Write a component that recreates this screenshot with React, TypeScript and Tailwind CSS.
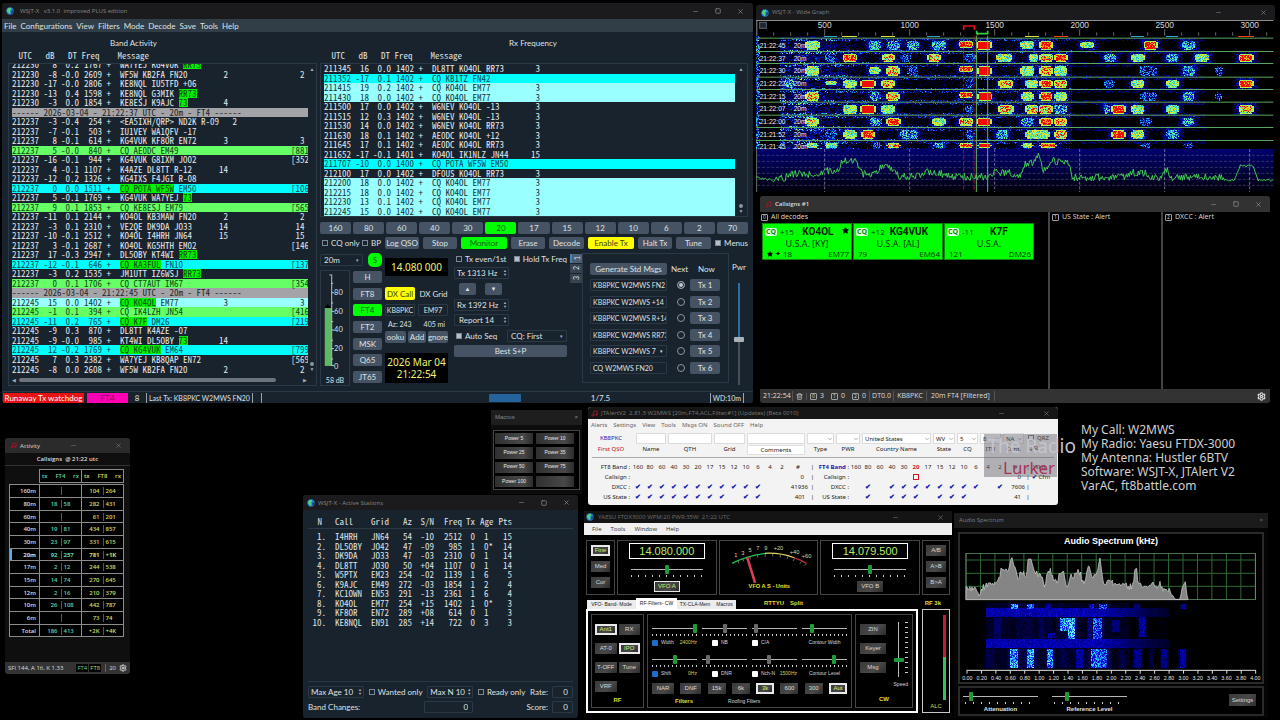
import React from "react";
import { Minus, Square, X, Settings, Music, Trash2, Star, ChevronDown } from "lucide-react";

/* ---------- shared class sets ---------- */

const mono = "font-['Noto_Sans_Mono_CJK_SC','Liberation_Mono',monospace] text-[9px]";
const ubuntu = "font-['Lato','Noto_Sans',sans-serif] text-[8px] leading-[10px]";
const segoe = "font-['Open_Sans','Noto_Sans',sans-serif]";
const msSans = "font-['Liberation_Sans',Arial,sans-serif]";
const darkBtn = "flex items-center justify-center overflow-hidden whitespace-nowrap rounded-[2px] bg-[#455364] text-[#dfe1e2]";
const darkField = "border border-[#2b3946] bg-[#19232d] text-[#dfe1e2] outline-none rounded-[1px]";

/* ---------- window furniture ---------- */

function Globe() {
  return (
    <svg viewBox="0 0 12 12" className="size-2 shrink-0" aria-hidden="true">
      <circle cx="6" cy="6" r="5.5" fill="#2878c8" />
      <path d="M3 2l4-1 1 3-2 1 1 3-2 3-2-3-2-2z" fill="#4fd08a" />
      <path d="M8 6l3-1-1 4-2 1z" fill="#123c78" />
    </svg>
  );
}

function Controls({ className, hideMax }: { className: string; hideMax?: boolean }) {
  return (
    <div className={className}>
      <button type="button" aria-label="Minimize"><Minus className="size-[7px]" strokeWidth={2} /></button>
      <button type="button" aria-label="Maximize" className={hideMax ? "opacity-0" : ""}><Square className="size-[6px]" strokeWidth={3} /></button>
      <button type="button" aria-label="Close"><X className="size-[7px]" strokeWidth={2.5} /></button>
    </div>
  );
}

function Tick({ label, on }: { label: string; on?: boolean }) {
  return (
    <label className="flex items-center gap-[3px] whitespace-nowrap">
      <input
        type="checkbox"
        defaultChecked={on}
        className="size-[6px] appearance-none border border-[#7b8794] bg-transparent checked:bg-[#b4bec8]"
      />
      {label}
    </label>
  );
}

/* ---------- decode lists ---------- */

type Tone = "" | "green" | "cyan" | "pale";
type Decode = { utc: string; db?: string; dt?: string; hz?: string; a?: string; hl?: string; b?: string; n?: string; end?: string; tone?: Tone; rule?: boolean };

const d = (utc: string, db: string, dt: string, hz: string, a: string, hl = "", b = "", n = "", end = "", tone: Tone = ""): Decode => ({ utc, db, dt, hz, a, hl, b, n, end, tone });

const band: Decode[] = [
  d("212230", "8", "0.2", "1767", "WA7YEJ KG4VUK ", "RR73"),
  d("212230", "-8", "-0.0", "2609", "WF5W KB2FA FN20", "", "", "2", "  2"),
  d("212230", "-17", "-0.0", "2806", "KE8NQL IU5TFD +06"),
  d("212230", "-13", "0.4", "1598", "KE8NQL G3MIK ", "RR73"),
  d("212230", "-3", "0.0", "1854", "KE8ESJ K9AJC ", "73", "", "4"),
  { utc: "------ 2026-03-04 - 21:22:37 UTC - 20m - FT4 ------", rule: true },
  d("212237", "-3", "-0.4", "254", "<EA5IXH/QRP> ND2K R-09   2"),
  d("212237", "-7", "-0.1", "503", "IU1VEY WA1QFV -17"),
  d("212237", "8", "-0.1", "614", "KG4VUK KF8OR EN72", "", "", "3", "  3"),
  d("212237", "5", "-0.0", "840", "CQ AE0DC EM49", "", "", "", "[881", "green"),
  d("212237", "-16", "-0.1", "944", "KG4VUK G8IXM JO02", "", "", "", "[352"),
  d("212237", "4", "-0.1", "1107", "K4AZE DL8TT R-12", "", "", "14"),
  d("212237", "-12", "0.2", "1326", "KG4IXS F4JGI R-08"),
  d("212237", "0", "0.0", "1511", "", "CQ POTA WF5W", " EM50", "", "[106", "cyan"),
  d("212237", "5", "-0.1", "1769", "KG4VUK WA7YEJ ", "73"),
  d("212237", "9", "0.1", "1853", "CQ KE8ESJ EM79", "", "", "", "[565", "green"),
  d("212237", "-11", "0.1", "2144", "KO4OL KB3MAW FN20", "", "", "2", "  2"),
  d("212237", "-3", "0.1", "2310", "VE2QE DK9DA JO33", "", "", "14", " 14"),
  d("212237", "-10", "-0.1", "2512", "KO4OL I4HRH JN64", "", "", "15", " 15"),
  d("212237", "3", "-0.1", "2687", "KO4OL KG5HTH EM02", "", "", "", "[146"),
  d("212237", "17", "-0.3", "2947", "DL5OBY KT4WI ", "RR73"),
  d("212237", "-12", "-0.1", "646", "", "CQ KA3FUL", " FN10", "", "[137", "cyan"),
  d("212237", "-3", "0.2", "1535", "JM1UTT IZ6WSJ ", "RR73"),
  d("212237", "0", "0.1", "1706", "CQ CT7AUT IM67", "", "", "", "[354", "green"),
  { utc: "------ 2026-03-04 - 21:22:45 UTC - 20m - FT4 ------", rule: true },
  d("212245", "15", "0.0", "1402", "", "CQ KO4OL", " EM77", "3", "  3", "pale"),
  d("212245", "-1", "0.1", "394", "CQ IK4LZH JN54", "", "", "", "[416", "green"),
  d("212245", "-11", "0.2", "765", "", "CQ K7F", " DM26", "", "[219", "cyan"),
  d("212245", "-9", "0.3", "870", "DL8TT K4AZE -07"),
  d("212245", "-9", "-0.0", "985", "KT4WI DL5OBY ", "73", "", "14"),
  d("212245", "12", "-0.2", "1769", "", "CQ KG4VUK", " EM64", "", "[799", "cyan"),
  d("212245", "7", "0.3", "2382", "WA7YEJ KB8QAP EN72", "", "", "", "[569"),
  d("212245", "-8", "0.0", "2608", "WF5W KB2FA FN20", "", "", "2", "  2"),
];

const rx: Decode[] = [
  d("211345", "16", "0.0", "1402", "DL8TT KO4OL RR73", "", "", "3"),
  d("211352", "-17", "0.1", "1402", "CQ KB1TZ FN42", "", "", "", "", "cyan"),
  d("211415", "19", "0.2", "1402", "CQ KO4OL EM77", "", "", "3", "", "pale"),
  d("211430", "18", "0.0", "1402", "CQ KO4OL EM77", "", "", "3", "", "pale"),
  d("211500", "17", "0.0", "1402", "W6NEV KO4OL -13", "", "", "3"),
  d("211515", "12", "0.3", "1402", "W6NEV KO4OL -13", "", "", "3"),
  d("211530", "14", "0.0", "1402", "W6NEV KO4OL RR73", "", "", "3"),
  d("211630", "18", "0.1", "1402", "AE0DC KO4OL +12", "", "", "3"),
  d("211645", "17", "0.1", "1402", "AE0DC KO4OL RR73", "", "", "3"),
  d("211652", "-17", "-0.1", "1401", "KO4OL IK1NLZ JN44", "", "", "15"),
  d("211707", "-10", "0.0", "1400", "CQ POTA WF5W EM50", "", "", "", "", "cyan"),
  d("212100", "17", "0.0", "1402", "DF0US KO4OL RR73", "", "", "3"),
  d("212200", "18", "0.0", "1402", "CQ KO4OL EM77", "", "", "3", "", "pale"),
  d("212215", "18", "0.0", "1402", "CQ KO4OL EM77", "", "", "3", "", "pale"),
  d("212230", "13", "0.1", "1402", "CQ KO4OL EM77", "", "", "3", "", "pale"),
  d("212245", "15", "0.0", "1402", "CQ KO4OL EM77", "", "", "3", "", "pale"),
];

const tones: Record<string, string> = {
  "": "text-[#e4e8ea]",
  green: "bg-[#66ff66] text-[#0d4a12]",
  cyan: "bg-[#00ffff] text-[#0b4a55]",
  pale: "bg-[#99ffff] text-[#12363c]",
};

function DecodeTable({ rows, label, className }: { rows: Decode[]; label: string; className: string }) {
  return (
    <table aria-label={label} className={`${mono} ${className} w-full shrink-0 table-fixed border-collapse leading-[9px]`}>
      <colgroup>
        <col className="w-[27px]" /><col className="w-[18px]" /><col className="w-[22px]" /><col className="w-[23px]" />
        <col className="w-[9px]" /><col className="w-[90px]" /><col className="w-[27px]" /><col />
      </colgroup>
      <tbody>
        {rows.map((r, i) =>
          r.rule ? (
            <tr key={i} className="bg-[#a3a3a8] text-[#22262a]"><td colSpan={8} className="whitespace-pre p-0">{r.utc}</td></tr>
          ) : (
            <tr key={i} className={tones[r.tone ?? ""]}>
              <td className="p-0">{r.utc}</td>
              <td className="p-0 text-right">{r.db}</td>
              <td className="whitespace-nowrap p-0 text-right">{r.dt}</td>
              <td className="p-0 text-right">{r.hz}</td>
              <td className="p-0 text-right">+</td>
              <td className="whitespace-pre p-0 pl-[9px]">{r.a}{r.hl && <span className="inline-block h-[9px] bg-[#00f000] align-top text-[#064d0a]">{r.hl}</span>}{r.b}</td>
              <td className="p-0 text-right">{r.n}</td>
              <td className="whitespace-pre p-0 pl-[63px]">{r.end}</td>
            </tr>
          ),
        )}
      </tbody>
    </table>
  );
}

function VScroll({ className }: { className: string }) {
  return (
    <div className={`${className} flex flex-col items-center justify-between py-[2px] text-[5px] leading-[6px] text-[#9da9b5]`}>
      <span>▲</span>
      <span className="flex flex-col items-center"><span className="size-[4px] rounded-full bg-[#8b95a0]" />▼</span>
    </div>
  );
}

/* ---------- WSJT-X main ---------- */

function Spin({ text, className }: { text: string; className: string }) {
  return (
    <div className={`${darkField} ${className} flex h-[12px] items-center justify-between pl-[2px] pr-[1px]`}>
      <input aria-label={text} defaultValue={text} className="w-full min-w-0 bg-transparent outline-none" />
      <span className="flex flex-col text-[4px] leading-[4px] text-[#aab4be]"><span>▲</span><span>▼</span></span>
    </div>
  );
}

function DarkSelect({ value, className }: { value: string; className: string }) {
  return (
    <div className={`${darkField} ${className} flex items-center pr-[3px]`}>
      <select aria-label={value} className="w-full min-w-0 appearance-none bg-transparent pl-[3px] outline-none"><option>{value}</option></select>
      <span className="text-[5px] text-[#aab4be]">▾</span>
    </div>
  );
}

const messages = ["KB8PKC W2MWS FN2", "KB8PKC W2MWS +14", "KB8PKC W2MWS R+14", "KB8PKC W2MWS RR73", "KB8PKC W2MWS 7", "CQ W2MWS FN20"];

function LevelMeter() {
  return (
    <div className="flex w-[30px] flex-1 flex-col items-center border border-[#2b3946]">
      <svg viewBox="0 0 30 104" className="h-[104px] w-[28px]" aria-label="Input level">
        <rect x="4" y="36" width="7" height="62" fill="#5fb864" />
        <path d="M4 36l3-4 4 4z" fill="#000" />
        <g stroke="#c9d0d6" strokeWidth="1" fill="none">
          <path d="M11.500 0V98M11 9.500h2M11 30.500h2M11 50.500h2M11 70.500h2M11 90.500h2M11 0.500h-2M11 19.500h3M11 39.500h3M11 59.500h3M11 79.500h3M11 97.500h3" />
        </g>
        <g fill="#dfe1e2" fontSize="8" fontFamily="Lato, sans-serif">
          <text x="14" y="22">80</text><text x="14" y="42">60</text><text x="14" y="62">40</text><text x="14" y="82">20</text><text x="14" y="101">0</text>
        </g>
      </svg>
      <span className="whitespace-nowrap text-[7px]">58 dB</span>
    </div>
  );
}

function Main() {
  return (
    <section aria-label="WSJT-X" className={`${ubuntu} absolute left-[2px] top-[3px] flex h-[400px] w-[751px] flex-col overflow-hidden rounded-[3px] bg-[#19232d] text-[#dfe1e2]`}>
      <header className={`${segoe} flex h-[16px] items-center gap-[6px] bg-[#1b1b1d] pl-[4px] text-[6px] text-[#85888a]`}>
        <Globe />
        <span className="whitespace-pre">WSJT-X   v3.1.0  improved PLUS edition</span>
        <Controls className="ml-auto flex items-center gap-[16px] pr-[9px]" />
      </header>
      <nav className="flex h-[13px] items-center gap-[4px] bg-[#313d47] pl-[2px]">
        {["File", "Configurations", "View", "Filters", "Mode", "Decode", "Save", "Tools", "Help"].map((m) => <button key={m} type="button">{m}</button>)}
      </nav>
      <div className="flex min-h-0 flex-1 pl-[6px] pr-[5px]">
        <div className="flex w-[309px] flex-col">
          <h2 className="mt-[6px] h-[12px] pl-[102px]">Band Activity</h2>
          <p className={`${mono} h-[13px] whitespace-pre pl-[6px] leading-[12px]`}>{" UTC   dB   DT Freq    Message"}</p>
          <div className="flex h-[323px] flex-col border border-[#2b3946]">
            <div className="flex">
              <div className="ml-[3px] flex h-[310px] flex-1 flex-col justify-end overflow-hidden">
                <DecodeTable rows={band} label="Band Activity" className="h-[314px]" />
              </div>
              <VScroll className="w-[8px]" />
            </div>
            <div className="flex flex-1 items-center gap-[3px] pl-[3px] pr-[9px] text-[5px] text-[#9da9b5]">
              <span>◀</span><span className="h-[4px] w-[257px] rounded-full bg-[#6b747d]" /><span className="ml-auto">▶</span>
            </div>
          </div>
        </div>

        <div className="ml-[3px] flex flex-1 flex-col">
          <h2 className="mt-[6px] h-[12px] pr-[2px] text-center">Rx Frequency</h2>
          <p className={`${mono} h-[13px] whitespace-pre pl-[7px] leading-[12px]`}>{" UTC   dB   DT Freq    Message"}</p>
          <div className="flex h-[154px] border border-[#2b3946]">
            <div className="ml-[3px] flex-1 overflow-hidden"><DecodeTable rows={rx} label="Rx Frequency" className="h-[152px]" /></div>
            <VScroll className="w-[12px]" />
          </div>
          <div className="mt-[5px] grid h-[12px] grid-cols-13 gap-[2px]">
            {["160", "80", "60", "40", "30", "20", "17", "15", "12", "10", "6", "2", "70"].map((b) => (
              <button key={b} type="button" className={`${darkBtn} ${b === "20" ? "bg-[#00ff00]! text-[#145a1c]!" : ""}`}>{b}</button>
            ))}
          </div>
          <div className="mt-[3px] flex h-[12px] items-stretch gap-[4px]">
            <div className="flex w-[61px] items-center justify-between pl-[2px]"><Tick label="CQ only" /><Tick label="BP" /></div>
            <button type="button" className={`${darkBtn} w-[34px]`}>Log QSO</button>
            <button type="button" className={`${darkBtn} w-[34px]`}>Stop</button>
            <button type="button" className={`${darkBtn} w-[46px] bg-[#00ff00]! text-[#145a1c]!`}>Monitor</button>
            <button type="button" className={`${darkBtn} w-[34px]`}>Erase</button>
            <button type="button" className={`${darkBtn} w-[35px]`}>Decode</button>
            <button type="button" className={`${darkBtn} w-[46px] bg-[#ffff00]! text-[#3d3d10]!`}>Enable Tx</button>
            <button type="button" className={`${darkBtn} w-[34px]`}>Halt Tx</button>
            <button type="button" className={`${darkBtn} w-[35px]`}>Tune</button>
            <div className="ml-auto flex items-center"><Tick label="Menus" on /></div>
          </div>

          <div className="mt-[4px] flex h-[133px]">
            <div className="flex w-[62px] flex-col">
              <div className="flex h-[14px] items-center justify-between">
                <DarkSelect value="20m" className="h-[12px] w-[43px]" />
                <button type="button" className="size-[14px] rounded-[5px] bg-[#00ff00] text-[#145a1c]">S</button>
              </div>
              <div className="mt-[3px] flex flex-1 justify-between">
                <LevelMeter />
                <div className="ml-[3px] flex h-[113px] w-[29px] flex-col justify-between pt-[1px]">
                  {["H", "FT8", "FT4", "FT2", "MSK", "Q65", "JT65"].map((m) => (
                    <button key={m} type="button" className={`${darkBtn} h-[12px] ${m === "FT4" ? "bg-[#00ff00]! text-[#145a1c]!" : ""}`}>{m}</button>
                  ))}
                </div>
              </div>
            </div>

            <div className="ml-[3px] flex w-[63px] flex-col pt-[5px]">
              <output className="flex h-[18px] items-center justify-center bg-black font-['Noto_Sans',sans-serif] text-[10px] text-[#eef27a]">14.080 000</output>
              <div className="mt-[11px] flex h-[13px] justify-between">
                <button type="button" className="w-[30px] whitespace-nowrap rounded-[2px] bg-[#ffff00] text-[#3d3d10]">DX Call</button>
                <span className="flex w-[29px] items-center justify-center whitespace-nowrap">DX Grid</span>
              </div>
              <div className="mt-[4px] flex h-[12px] justify-between text-[7px]">
                <input aria-label="DX call" defaultValue="KB8PKC" className={`${darkField} w-[30px] px-0 text-center`} />
                <input aria-label="DX grid" defaultValue="EM97" className={`${darkField} w-[30px] text-center`} />
              </div>
              <div className="mt-[3px] flex h-[10px] justify-between px-[3px] text-[7px]"><span>Az: 243</span><span>405 mi</span></div>
              <div className="mt-[2px] flex h-[12px] gap-[2px]">
                <button type="button" className={`${darkBtn} w-[21px]`}>ooku</button>
                <button type="button" className={`${darkBtn} w-[18px]`}>Add</button>
                <button type="button" className={`${darkBtn} w-[20px]`}>gnore</button>
              </div>
              <output className="mt-[10px] flex h-[30px] flex-col items-center justify-center whitespace-nowrap bg-black font-['Noto_Sans',sans-serif] text-[10px] leading-[12px] text-[#eef27a]">
                <span>2026 Mar 04</span><span>21:22:54</span>
              </output>
            </div>

            <div className="ml-[6px] flex w-[113px] flex-col">
              <div className="flex h-[12px] items-center justify-between pl-[2px]"><Tick label="Tx even/1st" /><Tick label="Hold Tx Freq" on /></div>
              <Spin text="Tx 1313 Hz" className="mt-[2px] w-[55px]" />
              <div className="mt-[4px] flex h-[12px] gap-[9px] pl-[5px]">
                <button type="button" aria-label="Up" className={`${darkBtn} w-[17px] text-[6px]`}>▲</button>
                <button type="button" aria-label="Down" className={`${darkBtn} w-[17px] text-[6px]`}>▼</button>
              </div>
              <Spin text="Rx 1392 Hz" className="mt-[4px] w-[55px]" />
              <Spin text=" Report 14" className="mt-[3px] w-[55px]" />
              <div className="mt-[4px] flex h-[12px] items-center justify-between pl-[2px]"><Tick label="Auto Seq" on /><DarkSelect value="CQ: First" className="h-[12px] w-[60px]" /></div>
              <button type="button" className={`${darkBtn} mt-[3px] h-[12px]`}>Best S+P</button>
            </div>

            <div role="tablist" className="ml-[3px] mt-[1px] flex w-[12px] flex-col gap-[1px] text-[7px]">
              {["1", "2", "3"].map((t) => (
                <button key={t} type="button" role="tab" aria-selected={t === "1"} className={`flex h-[9px] items-center justify-center leading-[9px] [writing-mode:sideways-lr] ${t === "1" ? "border-l-2 border-[#3a86c8] bg-[#4c6075]" : "bg-[#37414f]"}`}>{t}</button>
              ))}
            </div>

            <div className="flex h-[130px] w-[147px] flex-col border border-[#2b3946] pl-[7px] pr-[8px] pt-[9px]">
              <div className="flex h-[12px] items-center">
                <button type="button" className={`${darkBtn} h-[12px] w-[77px]`}>Generate Std Msgs</button>
                <span className="ml-[4px]">Next</span>
                <span className="ml-[10px]">Now</span>
              </div>
              <div className="mt-[4px] flex h-[95px] flex-col justify-between">
                {messages.map((m, i) => (
                  <div key={m} className="flex h-[12px] items-center">
                    <div className={`${darkField} flex h-[12px] w-[77px] items-center`}>
                      <input aria-label={`Message ${i + 1}`} defaultValue={m} className="w-full min-w-0 bg-transparent pl-[2px] text-[7px] outline-none" />
                      {i === 4 && <span className="pr-[3px] text-[5px]">▾</span>}
                    </div>
                    <input type="radio" name="next" aria-label={`Next ${i + 1}`} defaultChecked={i === 0} className="ml-[10px] size-[8px] appearance-none rounded-full border border-[#8b95a0] checked:bg-[#c3cad0] checked:shadow-[inset_0_0_0_1px_#19232d]" />
                    <button type="button" className={`${darkBtn} ml-auto h-[12px] w-[30px]`}>Tx {i + 1}</button>
                  </div>
                ))}
              </div>
            </div>
            <label className="ml-auto flex w-[18px] flex-col items-center pt-[9px]">
              Pwr
              <input
                type="range"
                defaultValue={44}
                className="mt-[11px] h-[102px] w-[10px] appearance-none bg-[linear-gradient(#2a6fa8_0_56%,#45505c_56%)] bg-[length:2px_100%] bg-center bg-no-repeat [direction:rtl] [writing-mode:vertical-lr] [&::-webkit-slider-thumb]:h-[5px] [&::-webkit-slider-thumb]:w-[10px] [&::-webkit-slider-thumb]:appearance-none [&::-webkit-slider-thumb]:rounded-[1px] [&::-webkit-slider-thumb]:bg-[#a9b2ba]"
              />
            </label>
          </div>
        </div>
      </div>
      <footer className="flex h-[12px] items-center border-t border-[#2b3946]">
        <span className="ml-[1px] flex h-[10px] w-[81px] items-center justify-center whitespace-nowrap bg-[#e81212] text-white">Runaway Tx watchdog</span>
        <span className="ml-[3px] flex h-[10px] w-[41px] items-center justify-center bg-[#ff00b4] text-[#7a0a5c]">FT4</span>
        <span className="w-[19px] border-r border-[#9aa4ad] text-center">8</span>
        <span className="ml-[2px] whitespace-nowrap border-r border-[#9aa4ad] pr-[2px] text-[7px]">Last Tx: KB8PKC W2MWS FN20</span>
        <span className="ml-[8px] h-[10px] w-px bg-[#9aa4ad]" />
        <span className="ml-auto h-[8px] w-[32px] rounded-[1px] bg-[#25639c]" />
        <span className="ml-[70px] w-[119px]">1/7.5</span>
        <span className="mr-[9px] border-x border-[#9aa4ad] px-[2px] text-[7px]">WD:10m</span>
      </footer>
    </section>
  );
}

/* ---------- rasterised spectra ---------- */

const noise = (x: number, y: number) => {
  const s = Math.sin(x * 12.9898 + y * 78.233) * 43758.5453;
  return s - Math.floor(s);
};

const palette = ["#000000", "#00003c", "#000078", "#0014b4", "#0a46dc", "#1e8ce6", "#32c8dc", "#64f0a0", "#a5fa50", "#ebe628", "#ff8c14", "#f00a00"];

function raster(x0: number, y0: number, x1: number, y1: number, colors: string[], f: (x: number, y: number) => number) {
  const paths = colors.map(() => "");
  for (let y = y0; y < y1; y += 3) {
    let run = x0;
    let last = 0;
    for (let x = x0; x <= x1; x += 3) {
      const v = Math.max(0, Math.min(colors.length - 1, Math.floor(f(x, y) * colors.length)));
      if (v !== last || x + 3 > x1) {
        if (last > 0) paths[last] += `M${run} ${y}h${x - run}v3h${run - x}z`;
        run = x;
        last = v;
      }
    }
  }
  return paths;
}

const rowTops = [117, 156, 193, 234, 271, 309, 348, 385, 424];
const rowEnds = [153, 189, 230, 267, 305, 344, 381, 420, 447];
const stamps = ["21:22:45", "21:22:37", "21:22:30", "21:22:22", "21:22:15", "21:22:07", "21:22:00", "21:21:52", "21:21:45"];

// Each signal is [start, end, strength, top inset, bottom inset].
const signals: number[][][] = [
  [[150, 195, 3], [340, 378, 2], [395, 435, 2], [455, 492, 2], [530, 572, 2], [610, 655, 5, 3, 10], [662, 711, 6], [795, 838, 3, 3, 7], [852, 893, 5], [975, 1018, 3, 6, 9], [1165, 1208, 5], [1280, 1320, 2]],
  [[208, 245, 1], [262, 307, 5], [380, 420, 4], [435, 468, 1], [515, 558, 4], [625, 665, 1], [722, 772, 3], [820, 850, 3], [852, 895, 4], [897, 938, 5], [1045, 1082, 2], [1128, 1170, 3], [1232, 1270, 2], [1318, 1362, 3], [1450, 1496, 5]],
  [[150, 193, 3], [340, 378, 3, 6, 9], [392, 435, 4], [455, 490, 1], [610, 655, 5, 3, 14], [665, 710, 6], [795, 838, 3], [852, 893, 4], [895, 937, 3], [1150, 1205, 1], [1282, 1320, 2], [1380, 1405, 1]],
  [[85, 120, 2], [208, 247, 3, 6, 14], [263, 305, 3], [315, 362, 6], [378, 420, 4], [628, 660, 1], [728, 775, 4], [810, 850, 3], [852, 893, 5], [895, 937, 4], [1045, 1080, 1], [1127, 1168, 3], [1232, 1272, 3], [1450, 1496, 5]],
  [[150, 193, 4], [345, 378, 2], [393, 435, 4], [610, 655, 5, 3, 12], [665, 712, 6], [797, 837, 3], [852, 892, 5], [897, 937, 3], [1155, 1207, 1], [1282, 1318, 2], [1380, 1400, 1]],
  [[262, 307, 3], [315, 362, 6], [378, 420, 3], [630, 655, 1], [728, 777, 4], [810, 850, 4], [850, 893, 4], [895, 937, 2], [1045, 1065, 2], [1067, 1112, 5], [1128, 1168, 3], [1232, 1272, 3], [1450, 1496, 4]],
  [[150, 192, 4], [343, 380, 2], [393, 437, 5], [530, 572, 3], [610, 655, 4], [663, 710, 6], [797, 837, 2], [852, 893, 5], [895, 937, 4], [1155, 1190, 1], [1280, 1318, 2]],
  [[208, 247, 1], [263, 305, 3], [317, 360, 5], [435, 490, 2], [630, 660, 1], [722, 760, 2], [810, 885, 3], [897, 937, 4], [1067, 1112, 5], [1128, 1168, 3], [1232, 1272, 2]],
  [[150, 192, 3], [208, 250, 3], [345, 380, 1], [393, 437, 4], [533, 570, 2], [610, 655, 5], [665, 710, 6], [797, 837, 3], [852, 905, 5], [1155, 1190, 1], [1282, 1318, 1]],
];
const strength = [0, 0.3, 0.46, 0.66, 0.8, 0.96, 1];
const jitter = [0, 0.3, 0.3, 0.22, 0.3, 0.2, 0.02];

const waterfall = raster(4, 108, 1555, 447, palette, (x, y) => {
  const n = noise(x, y);
  let row = 0;
  while (row < 8 && y > rowEnds[row]) row++;
  const top = rowTops[row];
  const end = rowEnds[row];
  const edge = Math.min(Math.abs(y - top), Math.abs(end - y)) < 6 ? 1 : 0;
  const clump = noise(Math.floor(x / 15), Math.floor(y / 9));
  const reach = x < 75 ? 0.06 : x < 330 ? 0.26 - Math.abs(x - 150) / 1100 : x < 950 ? 0.1 : x < 1400 ? 0.07 : 0.03;
  let v = reach * (0.2 + n * (x < 330 ? 0.6 + clump : 0.9)) + (edge && x > 75 && x < 1350 ? n * n * (x < 950 ? 0.34 : 0.2) : 0);
  if (x < 16) v = n * 0.6;
  for (const [a, b, s, ti = 3, bi = 4] of signals[row]) {
    const dx = Math.max(a - x, x - b);
    const dy = Math.max(top + ti - y, y - (end - bi));
    const corner = dx > -6 && dy > -6;
    if (dx < 0 && dy < 0 && !corner) {
      const rim = s > 3 && (dx > -6 || dy > -4);
      v = rim ? 0.66 + n * 0.12 : strength[s] + (n - 0.5) * jitter[s] * 1.6;
    } else if (dx < 15 && dy < 6 && s > 1) v = Math.max(v, (0.06 + n * 0.3) * (1 - Math.max(dx, 0) / 24));
  }
  return y < top ? v * 0.8 : v;
});

const bumps = [[262, 305, 40], [380, 415, 26], [210, 245, 10], [515, 555, 14], [720, 770, 12], [810, 850, 40], [850, 880, 20], [892, 937, 46], [1130, 1168, 14], [1232, 1236, 20], [1455, 1493, 42]];
const trace = (() => {
  let p = "";
  for (let x = 4; x <= 1555; x += 3) {
    let y = x < 60 ? 532 + x / 6 : x < 110 ? 542 - (x - 60) / 3 : x < 400 ? 522 : x < 940 ? 530 : x < 1400 ? 532 : 540;
    for (const [a, b, h] of bumps) {
      const out = Math.max(a - x, x - b, 0);
      if (out < 16) y -= h * (1 - out / 16);
    }
    y += (noise(x, 7) - 0.5) * (x > 1410 || x < 60 ? 7 : 22);
    p += `${x === 4 ? "M" : "L"}${x} ${y.toFixed(1)}`;
  }
  return p;
})();

function WideGraph() {
  const labels = [500, 1000, 1500, 2000, 2500, 3000];
  return (
    <section aria-label="Wide Graph" className="absolute left-[756px] top-[5px] flex w-[519px] flex-col overflow-hidden rounded-t-[3px] bg-black">
      <header className={`${segoe} flex h-[15px] items-center gap-[3px] bg-[#1b1b1d] pl-[5px] text-[6px] text-[#7c7e80]`}>
        <Globe /><span>WSJT-X - Wide Graph</span>
        <Controls hideMax className="ml-auto flex items-center gap-[16px] pr-[8px]" />
      </header>
      <svg viewBox="3 60 1557 516" className="block w-full" role="img" aria-label="Waterfall and spectrum from 0 to 3200 hertz">
        <defs>
          <linearGradient id="floor" x1="0" x2="0" y1="0" y2="1"><stop offset="0" stopColor="#00006e" /><stop offset="0.5" stopColor="#000040" /><stop offset="1" stopColor="#000008" /></linearGradient>
        </defs>
        <path d="M4 61.500H1555M5.500 60V576" stroke="#8c8c8c" strokeWidth="3" />
        <rect x="14" y="67" width="20" height="18" fill="#22262e" stroke="#5a6472" strokeWidth="3" />
        <g stroke="#a0a0a0" strokeWidth="2">
          {Array.from({ length: 30 }, (_, i) => i + 2).map((k) => <path key={k} d={`M${k * 51 - 46} ${k % 5 ? 97 : 88}V107`} />)}
        </g>
        <g fill="#d8d8d8" fontSize="25" fontFamily="'Liberation Sans', Arial, sans-serif" textAnchor="middle">
          {labels.map((l, i) => <text key={l} x={209 + i * 255} y="85">{l}</text>)}
        </g>
        <path d="M626 90V78h32v12" fill="none" stroke="#e01020" strokeWidth="5" />
        <path d="M665 92v9h33v-9" fill="none" stroke="#30d040" strokeWidth="5" />
        <g shapeRendering="crispEdges">{waterfall.map((p, i) => p && <path key={i} d={p} fill={palette[i]} />)}</g>
        <g shapeRendering="crispEdges">
          <path d="M208 109h38M516 109h38M1128 109h38M1232 109h38" stroke="#32a0d0" strokeWidth="4" />
          <path d="M262 109h45M378 109h42M810 109h42" stroke="#d8e040" strokeWidth="5" />
          <path d="M897 109h42M1450 109h46" stroke="#f04010" strokeWidth="5" />
        </g>
        <g stroke="#5aa860" strokeWidth="3">
          {[114, 154, 190, 231, 268, 306, 345, 382, 421].map((y) => <path key={y} d={`M4 ${y + 0.5}H1555`} />)}
        </g>
        <g fill="#f0f0f0" fontSize="20" fontFamily="'Liberation Sans', Arial, sans-serif">
          {stamps.map((s, i) => <React.Fragment key={s}><text x="14" y={144 + i * 38}>{s}</text><text x="116" y={144 + i * 38}>20m</text></React.Fragment>)}
        </g>
        <rect x="7" y="447" width="1548" height="129" fill="url(#floor)" />
        <g stroke="#4c4c7c" strokeWidth="2" strokeDasharray="9 5">
          {[466, 484, 502, 520, 538, 556].map((y) => <path key={y} d={`M7 ${y}H1555`} />)}
          {labels.map((l, i) => <path key={l} d={`M${209 + i * 255} 447V576`} stroke="#a0a0b0" />)}
        </g>
        <path d={trace} fill="none" stroke="#3fcf4d" strokeWidth="3" />
        <path d="M626 107V576M657 107V576" stroke="#a01020" strokeWidth="3" strokeDasharray="12 6" />
        <path d="M664 107V576M698 107V576" stroke="#58b860" strokeWidth="3" />
      </svg>
    </section>
  );
}

/* ---------- callsigns ---------- */

function Index({ n }: { n: number }) {
  return <span className="flex size-[7px] items-center justify-center rounded-[1px] border border-[#a0a0a0] text-[5px] leading-[5px]">{n}</span>;
}

function Card({ db, call, place, miles, grid, star }: { db: string; call: string; place: string; miles: string; grid: string; star?: boolean }) {
  return (
    <article className="flex h-[37px] w-[90px] flex-col border border-[#0a8a0a] bg-[#00ff00] px-[2px] text-[#053005]">
      <div className="flex h-[15px] items-center gap-[3px]">
        <span className="rounded-[2px] bg-[#d8ffd8] px-[1px] text-[7px] font-bold leading-[8px] text-[#0a8a0a]">CQ</span>
        <span className="text-[8px]">{db}</span>
        <span className="flex-1 text-center font-['Roboto',sans-serif] text-[10px] font-bold text-[#032003]">{call}</span>
        <span className="flex h-full w-[7px] items-start pt-[3px]">{star && <Star className="size-[7px] fill-black text-black" />}</span>
      </div>
      <div className="text-center text-[9px] leading-[10px]">{place}</div>
      <div className="flex items-center justify-between text-[8px] leading-[10px]">
        <span className="flex items-center gap-[2px] pl-[2px]">
          {star && <><Star className="size-[6px] fill-black text-black" /><span className="text-[7px] text-black">✦</span></>}{miles}
        </span>
        <span>{grid}</span>
      </div>
    </article>
  );
}

function Callsigns() {
  return (
    <section aria-label="Callsigns #1" className={`${segoe} absolute left-[760px] top-[196px] flex h-[207px] w-[510px] flex-col overflow-hidden rounded-[3px] bg-black text-[7px] text-[#dcdcdc]`}>
      <header className="flex h-[16px] items-center gap-[3px] bg-[#323232] pl-[5px] text-[6px]">
        <Music className="size-[7px] text-[#a01828]" strokeWidth={3} /><span className="font-semibold">Callsigns #1</span>
        <Controls className="ml-auto flex items-center gap-[16px] pr-[8px] text-[#8c8c8c]" />
      </header>
      <div className="flex flex-1">
        <div className="flex-1 border-r-2 border-[#444]">
          <h3 className="flex h-[11px] items-center gap-[3px] pl-[1px]"><Index n={0} />All decodes</h3>
          <div className="flex gap-px pl-[2px]">
            <Card db="+15" call="KO4OL" place="U.S.A. [KY]" miles="18" grid="EM77" star />
            <Card db="+12" call="KG4VUK" place="U.S.A. [AL]" miles="79" grid="EM64" />
            <Card db="-11" call="K7F" place="U.S.A." miles="121" grid="DM26" />
          </div>
        </div>
        <div className="w-[113px] border-r-2 border-[#444]"><h3 className="flex h-[11px] items-center gap-[3px] pl-[2px]"><Index n={1} />US State : Alert</h3></div>
        <div className="w-[107px]"><h3 className="flex h-[11px] items-center gap-[3px] pl-[2px]"><Index n={2} />DXCC : Alert</h3></div>
      </div>
      <footer className="flex h-[14px] items-center bg-[#333] pl-[3px]">
        <span className="w-[30px] border-r border-[#555]">21:22:54</span>
        <span className="flex w-[14px] justify-center border-r border-[#555]"><Trash2 className="size-[7px]" /></span>
        <span className="flex w-[20px] items-center justify-center gap-[3px]"><Index n={0} />3</span>
        <span className="flex w-[22px] items-center justify-center gap-[3px]"><Index n={1} />0</span>
        <span className="flex w-[20px] items-center justify-center gap-[3px]"><Index n={2} />0</span>
        <span className="w-[25px] border-x border-[#555] text-center">DT0.0</span>
        <span className="w-[33px] border-r border-[#555] text-center">KB8PKC</span>
        <span className="border-r border-[#555] px-[4px]">20m FT4 [Filtered]</span>
        <button type="button" aria-label="Settings" className="ml-auto pr-[4px]"><Settings className="size-[9px]" strokeWidth={3} /></button>
      </footer>
    </section>
  );
}

/* ---------- activity ---------- */

const activity = [
  ["160m", "", "", "104", "264"], ["80m", "18", "58", "282", "431"], ["60m", "", "", "61", "201"], ["40m", "19", "81", "434", "857"],
  ["30m", "23", "97", "331", "615"], ["20m", "92", "257", "781", "+1K"], ["17m", "2", "12", "244", "538"], ["15m", "14", "74", "270", "645"],
  ["12m", "2", "16", "210", "379"], ["10m", "26", "108", "442", "787"], ["6m", "", "", "73", "74"], ["Total", "186", "413", "+2K", "+4K"],
];

function Pair({ sent, heard }: { sent: string; heard: string }) {
  return (
    <div className="grid grid-cols-2">
      <span className="pr-[3px] text-right">{sent}</span>
      <span className="border-l border-[#555] pl-[2px]">{heard || "\u00a0"}</span>
    </div>
  );
}

function Activity() {
  return (
    <section aria-label="Activity" className={`${segoe} absolute left-[5px] top-[438px] flex h-[236px] w-[125px] flex-col overflow-hidden rounded-[3px] bg-[#0f0f0f] text-[6px] leading-[8px] text-[#dcdcdc]`}>
      <header className="flex h-[15px] items-center gap-[3px] bg-[#2b2b2b] pl-[5px]">
        <Music className="size-[7px] text-[#a01828]" strokeWidth={3} />Activity
        <Controls hideMax className="ml-auto flex items-center gap-[16px] pr-[8px] text-[#707070]" />
      </header>
      <h3 className="h-[13px] whitespace-pre border-b border-[#333] text-center font-semibold leading-[13px]">Callsigns  @ 21:22 utc</h3>
      <table className="ml-[4px] mt-[3px] w-[115px] table-fixed border-collapse font-semibold">
        <colgroup><col className="w-[30px]" /><col /><col /></colgroup>
        <thead>
          <tr className="h-[13px]">
            <th aria-label="Band" />
            <th className="border border-[#8c8c8c] bg-black p-0 text-[#5ad0b0]"><div className="flex justify-between px-[2px] font-semibold"><span>tx</span><span>FT4</span><span>rx</span></div></th>
            <th className="border border-[#8c8c8c] bg-black p-0 text-[#d0d860]"><div className="flex justify-between px-[2px] font-semibold"><span>tx</span><span>FT8</span><span>rx</span></div></th>
          </tr>
          <tr className="h-[2px]"><td colSpan={3} className="p-0" /></tr>
        </thead>
        <tbody className="[&>tr:nth-child(3n)]:h-[12px]">
          {activity.map(([b, t4, r4, t8, r8]) => (
            <tr key={b} className={`h-[13px] bg-black ${b === "20m" ? "font-bold" : ""}`}>
              <th className={`border border-[#8c8c8c] p-0 pr-[3px] text-right ${b === "20m" ? "shadow-[inset_2px_0_0_#60a8e0]" : "font-semibold"}`}>{b}</th>
              <td className="border border-[#8c8c8c] p-0 text-[#5ad0b0]"><Pair sent={t4} heard={r4} /></td>
              <td className="border border-[#8c8c8c] p-0 text-[#d0d860]"><Pair sent={t8} heard={r8} /></td>
            </tr>
          ))}
        </tbody>
      </table>
      <footer className="mt-auto flex h-[12px] items-center bg-[#333] pl-[3px]">
        <span>SFI 144, A 16, K 1.33</span>
        <span className="ml-auto bg-black px-[1px] text-[#5ad0b0]">FT4</span><span className="ml-px bg-black px-[1px] text-[#d0d860]">FT8</span>
        <span className="ml-[4px] border-l border-[#666] pl-[3px]">20</span>
        <button type="button" aria-label="Activity settings" className="ml-[3px] mr-[3px]"><Settings className="size-[8px]" strokeWidth={3} /></button>
      </footer>
    </section>
  );
}

/* ---------- macros ---------- */

function Macros() {
  return (
    <section aria-label="Macros" className={`${msSans} absolute left-[491px] top-[410px] flex h-[84px] w-[91px] flex-col bg-[#0c0c0c] text-[5px] text-[#e8e8e8]`}>
      <header className="flex h-[15px] items-center justify-between bg-[#1e1e1e] px-[4px] text-[6px] text-[#8a8a8a]">Macros<button type="button" aria-label="Close macros">×</button></header>
      <div className="mx-[2px] mt-[5px] grid h-[60px] grid-cols-2 grid-rows-4 gap-x-[3px] gap-y-[3px] border border-[#444] bg-black py-[2px] pl-[1px] pr-[5px]">
        {["Power 5", "Power 10", "Power 25", "Power 35", "Power 50", "Power 75", "Power 100", ""].map((m) => (
          <button key={m} type="button" aria-label={m || "Empty macro"} className="bg-[linear-gradient(90deg,#303030,#484848_75%,#2c2c2c)]">{m}</button>
        ))}
      </div>
    </section>
  );
}

/* ---------- active stations ---------- */

const stations = [
  ["1.", "I4HRH", "JN64", "54", "-10", "2512", "0", "1", "15"],
  ["2.", "DL5OBY", "JO42", "47", "-09", "985", "1", "0*", "14"],
  ["3.", "DK9DA", "JO33", "47", "-03", "2310", "0", "1", "14"],
  ["4.", "DL8TT", "JO30", "50", "+04", "1107", "0", "1", "14"],
  ["5.", "W5PTX", "EM23", "254", "-02", "1139", "1", "6", "5"],
  ["6.", "K9AJC", "EM49", "272", "-03", "1854", "1", "2", "4"],
  ["7.", "KC1OWN", "EN53", "291", "-13", "2361", "1", "6", "4"],
  ["8.", "KO4OL", "EM77", "254", "+15", "1402", "1", "0*", "3"],
  ["9.", "KF8OR", "EN72", "289", "+08", "614", "0", "1", "3"],
  ["10.", "KE8NQL", "EN91", "285", "+14", "722", "0", "3", "3"],
];
const stationAlign = ["text-right", "pl-[9px] text-left", "text-left", "text-right", "text-right", "text-right", "text-right", "pl-[9px] text-left", "text-right"];

function ActiveStations() {
  return (
    <section aria-label="Active Stations" className={`${ubuntu} absolute left-[303px] top-[495px] flex h-[223px] w-[275px] flex-col overflow-hidden rounded-[3px] bg-[#19232d] text-[#dfe1e2]`}>
      <header className={`${segoe} flex h-[15px] shrink-0 items-center gap-[3px] bg-[#1b1b1d] pl-[4px] text-[6px] text-[#85888a]`}>
        <Globe /><span>WSJT-X - Active Stations</span>
        <Controls className="ml-auto flex items-center gap-[16px] pr-[8px]" />
      </header>
      <div className="mx-[5px] mt-[4px] h-[168px] border-b border-[#2b3946] bg-[linear-gradient(#2b3946,#2b3946)] bg-[length:100%_1px] bg-[position:0_14px] bg-no-repeat">
        <table className={`${mono} w-[204px] table-fixed border-collapse whitespace-nowrap leading-[9px]`}>
          <colgroup>
            <col className="w-[18px]" /><col className="w-[45px]" /><col className="w-[23px]" /><col className="w-[18px]" /><col className="w-[22px]" /><col className="w-[28px]" /><col className="w-[13px]" /><col className="w-[22px]" /><col className="w-[15px]" />
          </colgroup>
          <thead>
            <tr className="h-[14px]">
              {["N", "Call", "Grid", "Az", "S/N", "Freq", "Tx", "Age", "Pts"].map((h, i) => <th key={h} className={`p-0 font-normal ${i === 0 ? "pr-[4px]! " : ""}${i === 7 ? "pl-[5px]! text-left" : stationAlign[i]}`}>{h}</th>)}
            </tr>
            <tr className="h-[4px]"><td colSpan={9} className="p-0" /></tr>
          </thead>
          <tbody className="[&>tr:nth-child(even)]:h-[10px] [&>tr:nth-child(odd)]:h-[9px]">
            {stations.map((r) => <tr key={r[0]}>{r.map((c, i) => <td key={i} className={`p-0 ${stationAlign[i]}`}>{c}</td>)}</tr>)}
          </tbody>
        </table>
      </div>
      <div className="mx-[5px] mt-[4px] flex h-[12px] items-center justify-between">
        <Spin text="Max Age 10" className="w-[56px]" />
        <Tick label="Wanted only" />
        <Spin text="Max N 10" className="w-[46px]" />
        <Tick label="Ready only" />
        <label className="flex items-center gap-[4px]">Rate:<input defaultValue="0" className={`${darkField} h-[12px] w-[21px] pr-[4px] text-right`} /></label>
      </div>
      <div className="mx-[5px] mt-[3px] flex h-[12px] items-center">
        <label className="flex items-center gap-[64px]">Band Changes:<input defaultValue="0" className={`${darkField} h-[12px] w-[49px] pr-[4px] text-right`} /></label>
        <label className="ml-auto flex items-center gap-[4px]">Score:<input defaultValue="0" className={`${darkField} h-[12px] w-[21px] pr-[4px] text-right`} /></label>
      </div>
    </section>
  );
}

/* ---------- JTAlert ---------- */

const bandNames = ["160", "80", "60", "40", "30", "20", "17", "15", "12", "10", "6", "4", "2"];

function Field({ label, value, w, pick, boxed }: { label: string; value?: string; w: string; pick?: boolean; boxed?: boolean }) {
  return (
    <label className={`${w} flex flex-col items-center`}>
      <span className="flex h-[11px] w-full items-center border border-[#dcdcdc] bg-white">
        {pick ? (
          <>
            <select className="w-full min-w-0 appearance-none bg-transparent pl-[2px] outline-none"><option>{value}</option></select>
            <ChevronDown className="size-[6px] shrink-0 text-[#666]" />
          </>
        ) : <input className="w-full min-w-0 outline-none" />}
      </span>
      <span className={boxed ? "mt-px w-full border border-[#e0e0e0] bg-white text-center" : "mt-px"}>{label}</span>
    </label>
  );
}

function marks(list: string) {
  return bandNames.map((b) => {
    const on = list.split(" ").includes(b);
    return <td key={b} className="p-0 text-center text-[7px] font-bold text-[#1818b0]">{on ? "✔" : ""}</td>;
  });
}

const all8 = "160 80 60 40 30 20 17 15 12 10 6";

function JTAlert() {
  return (
    <section aria-label="JTAlert" className="absolute left-[588px] top-[407px] flex h-[98px] w-[470px] flex-col overflow-hidden rounded-[3px] bg-[#f3f3f3] font-['Noto_Sans',sans-serif] text-[6px] leading-[8px] text-[#222]">
      <header className="flex h-[12px] shrink-0 items-center gap-[3px] bg-[#161616] pl-[3px] text-[#707070]">
        <Music className="size-[7px] text-[#a01828]" strokeWidth={3} /><span className="whitespace-pre">JTAlertV2  2.81.5 W2MWS [20m,FT4,ACL,Filter,#1] (Updates) (Beta 0010)</span>
        <Controls hideMax className="ml-auto flex items-center gap-[16px] pr-[8px]" />
      </header>
      <nav className="flex h-[11px] items-center gap-[6px] pl-[3px] text-[#666]">
        {["Alerts", "Settings", "View", "Tools", "Msgs ON", "Sound OFF", "Help"].map((m) => <button key={m} type="button">{m}</button>)}
      </nav>
      <div className="mx-[4px] mt-[3px] flex h-[25px] gap-[2px] border-b border-[#aaa]">
        <div className="flex w-[42px] flex-col items-center gap-[3px] pr-[4px] pt-px"><span className="text-[#1818b0]">KB8PKC</span><span className="whitespace-nowrap text-[#c01828]">First QSO</span></div>
        <Field label="Name" w="w-[30px]" /><Field label="QTH" w="w-[44px]" /><Field label="Grid" w="w-[31px]" /><Field label="Comments" w="w-[58px]" boxed />
        <Field label="Type" value="" w="w-[27px]" pick /><Field label="PWR" value="" w="w-[24px]" pick /><Field label="Country Name" value="United States" w="w-[69px]" pick />
        <Field label="State" value="WV" w="w-[22px]" pick /><Field label="CQ" value="5" w="w-[21px]" pick /><Field label="ITU" value="8" w="w-[21px]" pick /><Field label="Cont." value="NA" w="w-[21px]" pick />
        <div className="flex flex-col gap-[2px] pl-[2px] pt-px"><label className="flex items-center gap-[3px]"><input type="checkbox" className="size-[6px] appearance-none border border-[#777] bg-white" />QRZ</label><span>QSL</span></div>
      </div>
      <table className="mx-[4px] mt-[4px] table-fixed border-collapse whitespace-nowrap">
        <colgroup>
          <col className="w-[40px]" />{bandNames.map((b) => <col key={b} className="w-[12px]" />)}<col className="w-[20px]" /><col className="w-[6px]" />
          <col className="w-[36px]" />{bandNames.map((b) => <col key={b} className="w-[12px]" />)}<col className="w-[19px]" /><col className="w-[6px]" /><col />
        </colgroup>
        <tbody className="[&>tr]:h-[10px] [&_td]:leading-[8px]">
          <tr>
            <th className="p-0 pr-[2px] text-right font-normal">FT8 Band :</th>{bandNames.map((b) => <td key={b} className="p-0 text-center">{b}</td>)}<td className="p-0 text-center">#</td><td className="p-0 text-right">|</td>
            <th className="p-0 pr-px text-right font-normal"><b className="text-[#1818b0]">FT4 Band</b> :</th>{bandNames.map((b) => <td key={b} className={`p-0 text-center ${b === "20" ? "font-bold text-[#d01828]" : ""}`}>{b}</td>)}<td className="p-0 text-center">#</td><td className="p-0 text-center">|</td><td className="p-0 pl-[2px]">Wkd</td>
          </tr>
          <tr>
            <th className="p-0 pr-[2px] text-right font-normal">Callsign :</th>{marks("")}<td className="p-0 pr-[4px] text-right">0</td><td className="p-0 text-right">|</td>
            <th className="p-0 pr-px text-right font-normal">Callsign :</th>
            {bandNames.map((b) => <td key={b} className="p-0">{b === "20" && <span className="mx-auto block size-[6px] border border-[#d01828]" />}</td>)}
            <td className="p-0 pr-[4px] text-right">0</td><td className="p-0 text-center">|</td><td className="p-0 pl-px"><span className="font-bold text-[#1818b0]">✔</span> Cfm</td>
          </tr>
          <tr>
            <th className="p-0 pr-[2px] text-right font-normal">DXCC :</th>{marks(all8)}<td className="p-0 text-right">41936</td><td className="p-0 text-right">|</td>
            <th className="p-0 pr-px text-right font-normal">DXCC :</th>{marks("80 40 30 20 17 15 12 10 6 2")}<td className="p-0 text-right">7606</td><td className="p-0 text-center">|</td><td />
          </tr>
          <tr>
            <th className="p-0 pr-[2px] text-right font-normal">US State :</th>{marks("160 80 60 40 30 20 17 15 10 6")}<td className="p-0 pr-[3px] text-right">401</td><td className="p-0 text-right">|</td>
            <th className="p-0 pr-px text-right font-normal">US State :</th>{marks("80 40 30 20 15 12 10")}<td className="p-0 pr-[4px] text-right">41</td><td className="p-0 text-center">|</td><td />
          </tr>
        </tbody>
      </table>
    </section>
  );
}

/* ---------- transceiver panel ---------- */

const key = "flex h-[11px] items-center justify-center overflow-hidden whitespace-nowrap bg-[linear-gradient(135deg,#3a3a3a,#484848_60%,#2c2c2c)] text-[6px] leading-[7px] text-[#d8d8d8]";
const keyOn = "border-2 border-[#e8e8e8] bg-[#3c5a2c]! text-[#c8f070]!";
const thumb = "block w-full h-[11px] appearance-none bg-[linear-gradient(#b8b8b8,#b8b8b8)] bg-[length:100%_1px] bg-center bg-no-repeat [&::-webkit-slider-thumb]:appearance-none [&::-webkit-slider-thumb]:h-[9px] [&::-webkit-slider-thumb]:w-[4px] [&::-webkit-slider-thumb]:rounded-[1px]";
const green = "[&::-webkit-slider-thumb]:bg-[#1f9a3a]";
const grey = "[&::-webkit-slider-thumb]:bg-[#6a6a6a]";
const dots = "h-[2px] bg-[repeating-linear-gradient(90deg,#c8c8c8_0_1px,transparent_1px_4px)]";

function Range({ label, value, tone }: { label: string; value: number; tone: string }) {
  return (
    <div>
      <input type="range" aria-label={label} defaultValue={value} className={`${thumb} ${tone}`} />
      <div className={dots} />
    </div>
  );
}

function Vfo({ freq, name, on }: { freq: string; name: string; on?: boolean }) {
  return (
    <div className="flex flex-1 flex-col items-center border border-[#444] pt-[2px]">
      <output className="flex h-[16px] w-[76px] items-center justify-center border border-white text-[11px] text-[#b4ea6a]">{freq}</output>
      <div className="mt-[5px] w-[72px]">
        <input type="range" aria-label={`${name} tuning`} defaultValue={50} className={`${thumb} ${green}`} />
        <div className="h-[2px] bg-[repeating-linear-gradient(90deg,#c8c8c8_0_1px,transparent_1px_7px)]" />
      </div>
      <button type="button" className={`${key} mt-[4px] w-[26px] ${on ? "border border-[#e8e8e8] bg-[#3c5a2c]! text-[#c8f070]!" : ""}`}>{name}</button>
    </div>
  );
}

function FilterControl({ label, value, tone, tick, hz, plain }: { label: string; value: number; tone: string; tick?: boolean; hz?: string; plain?: boolean }) {
  return (
    <div className="w-[45px]">
      <Range label={`${label} level`} value={value} tone={tone} />
      <div className="mt-[2px] flex h-[9px] items-center whitespace-nowrap text-[5px]">
        {plain ? <span className="w-full text-center">{label}</span> : (
          <label className={`flex flex-1 items-center gap-[3px] ${label === "NB" || label === "DNR" ? "pl-[10px]" : ""}`}>
            <input type="checkbox" defaultChecked={tick} className="size-[6px] appearance-none rounded-[1px] bg-white checked:bg-[#1c6fc8]" />{label}
            {hz && <span className="ml-auto text-[#c8d860]">{hz}</span>}
          </label>
        )}
      </div>
    </div>
  );
}

function Transceiver() {
  return (
    <section aria-label="Yaesu FTDX3000" className={`${msSans} absolute left-[584px] top-[511px] flex h-[205px] w-[368px] flex-col bg-black text-[6px] leading-[7px] text-[#d8d8d8]`}>
      <header className={`${segoe} flex h-[12px] items-center gap-[4px] bg-[#141414] pl-[2px] text-[#6c6c6c]`}>
        <Globe /><span className="whitespace-pre">YAESU FTDX3000 WPM:20 PWR:35W  21:22 UTC</span>
        <Controls hideMax className="ml-auto flex items-center gap-[16px] pr-[8px]" />
      </header>
      <nav className={`${segoe} flex h-[12px] items-center gap-[9px] bg-[#f0f0f0] pl-[8px] text-[#333]`}>
        {["File", "Tools", "Window", "Help"].map((m) => <button key={m} type="button">{m}</button>)}
      </nav>
      <div className="mx-[2px] mt-[5px] flex h-[55px] gap-[2px]">
        <div className="flex w-[29px] flex-col gap-[5px] border border-[#444] px-[4px] py-[4px]">
          <button type="button" className={`${key} ${keyOn}`}>Fine</button><button type="button" className={key}>Med</button><button type="button" className={key}>Cor</button>
        </div>
        <Vfo freq="14.080.000" name="VFO A" on />
        <div className="flex-1 border border-[#444]">
          <svg viewBox="400 95 305 168" className="h-full w-full" role="img" aria-label="S meter">
            <g fill="none" strokeWidth="4">
              <path d="M436 166Q482 142 545 134" stroke="#20c050" /><path d="M540 134Q592 132 632 148" stroke="#e0d860" /><path d="M632 148Q655 156 672 166" stroke="#c02838" />
            </g>
            <g stroke="#b0b090" strokeWidth="2"><path d="M455 158l3 8M470 152l3 8M492 145l2 8M516 139l1 8M541 137v8M565 136v8M590 139l-2 8M613 144l-3 8M634 150l-4 8M656 160l-5 7M672 167l-6 6" /></g>
            <path d="M484 147L509 228" stroke="#d84058" strokeWidth="8" />
            <g fill="#d8d8a0" fontSize="18" fontFamily="'Liberation Sans', Arial, sans-serif" textAnchor="middle">
              <text x="448" y="146">1</text><text x="470" y="138">3</text><text x="493" y="131">5</text><text x="518" y="125">7</text><text x="543" y="123">9</text><text x="583" y="125">+20</text><text x="634" y="137">+40</text><text x="672" y="150">+60</text>
            </g>
            <text x="554" y="244" textAnchor="middle" fill="#e8e030" fontSize="18" fontWeight="bold" fontFamily="'Liberation Sans', Arial, sans-serif">VFO A S - Units</text>
          </svg>
        </div>
        <Vfo freq="14.079.500" name="VFO B" />
        <div className="flex w-[28px] flex-col gap-[5px] border border-[#444] px-[3px] py-[4px]">
          {["A/B", "A>B", "B>A"].map((b) => <button key={b} type="button" className={key}>{b}</button>)}
        </div>
      </div>
      <div className="mx-[3px] mt-[3px] flex h-[11px] items-end font-bold text-[#e0dc38]">
        <div role="tablist" className="flex h-[11px] items-end text-[5px] font-normal text-[#222]">
          <button type="button" role="tab" className="h-[9px] w-[49px] whitespace-nowrap bg-[#ececec]">VFO- Band- Mode</button>
          <button type="button" role="tab" aria-selected="true" className="h-[11px] w-[41px] whitespace-nowrap bg-white">RF-Filters- CW</button>
          <button type="button" role="tab" className="h-[9px] w-[36px] whitespace-nowrap bg-[#ececec]">TX-CLA-Mem</button>
          <button type="button" role="tab" className="h-[9px] w-[23px] whitespace-nowrap bg-[#ececec]">Macros</button>
        </div>
        <span className="ml-[28px] self-center">RTTYU</span><span className="ml-[6px] self-center">Split</span>
        <span className="ml-auto self-center pr-[8px]">RF 3k</span>
      </div>
      <div className="mx-[2px] flex h-[104px] gap-[4px]">
        <div className="flex flex-1 gap-[3px] border-2 border-white p-[3px]">
          <div className="flex w-[53px] flex-col border border-[#444] px-[3px] pt-[9px]">
            <div className="grid grid-cols-2 gap-x-[2px] gap-y-[8px]">
              <button type="button" className={`${key} ${keyOn}`}>Ant1</button><button type="button" className={key}>RX</button>
              <button type="button" className={key}>AT-0</button><button type="button" className={`${key} ${keyOn}`}>IPO</button>
              <button type="button" className={key}>T-OFF</button><button type="button" className={key}>Tune</button>
              <button type="button" className={key}>VRF</button>
            </div>
            <span className="mt-[5px] text-center font-bold text-[#e0dc38]">RF</span>
          </div>
          <div className="flex flex-1 flex-col border border-[#444] px-[4px] pt-[8px]">
            <div className="flex justify-between">
              <FilterControl label="Width" value={100} tone={green} tick hz="2400Hz" /><FilterControl label="NB" value={50} tone={grey} /><FilterControl label="C/A" value={4} tone={grey} /><FilterControl label="Contour Width" value={20} tone={green} plain />
            </div>
            <div className="mt-[7px] flex justify-between">
              <FilterControl label="Shift" value={50} tone={green} tick hz="0Hz" /><FilterControl label="DNR" value={10} tone={grey} /><FilterControl label="Nch-N" value={36} tone={grey} hz="1500Hz" /><FilterControl label="Contour Level" value={72} tone={green} plain />
            </div>
            <div className="mt-[5px] flex justify-between">
              <button type="button" className={`${key} w-[22px]`}>NAR</button><button type="button" className={`${key} w-[21px]`}>DNF</button>
              {["15k", "6k", "3k", "600", "300", "Aut"].map((b) => <button key={b} type="button" className={`${key} w-[18px] ${b === "3k" || b === "Aut" ? keyOn : ""}`}>{b}</button>)}
            </div>
            <div className="mt-[4px] flex"><span className="ml-[23px] font-bold text-[#e0dc38]">Filters</span><span className="ml-[35px] text-[5px]">Roofing Filters</span></div>
          </div>
          <div className="flex w-[58px] flex-col border border-[#444] px-[4px] pt-[7px]">
            <div className="flex justify-between">
              <div className="flex flex-col gap-[8px] pt-[2px]">{["ZIN", "Keyer", "Msg"].map((b) => <button key={b} type="button" className={`${key} w-[26px]`}>{b}</button>)}</div>
              <label className="flex flex-col items-center text-[5px]">
                <span className="flex gap-px">
                  <input type="range" defaultValue={30} className="h-[55px] w-[10px] appearance-none bg-[linear-gradient(#b8b8b8,#b8b8b8)] bg-[length:1px_100%] bg-center bg-no-repeat [direction:rtl] [writing-mode:vertical-lr] [&::-webkit-slider-thumb]:h-[4px] [&::-webkit-slider-thumb]:w-[10px] [&::-webkit-slider-thumb]:appearance-none [&::-webkit-slider-thumb]:rounded-[1px] [&::-webkit-slider-thumb]:bg-[#1f9a3a]" />
                  <span className="h-[53px] w-[3px] bg-[repeating-linear-gradient(#c8c8c8_0_1px,transparent_1px_5px)]" />
                </span>
                <span className="mt-[4px]">Speed</span>
              </label>
            </div>
            <span className="mt-auto pb-[4px] text-center font-bold text-[#e0dc38]">CW</span>
          </div>
        </div>
        <div className="flex w-[28px] flex-col items-end border border-[#c8c8c8] px-[3px] pt-[5px]">
          <div className="h-[85px] w-[3px] bg-[linear-gradient(#c81830_50%,#38c060_50%)]" />
          <span className="mt-[3px] w-full text-center text-[#c8d860]">ALC</span>
        </div>
      </div>
    </section>
  );
}

/* ---------- audio spectrum ---------- */

const blues = ["#000000", "#00001c", "#000034", "#000054", "#00007c", "#0000a4", "#0606cc", "#1430f0", "#1c78ff", "#30c8f8", "#70f8f0"];

const audioBands: number[][] = [
  [592, 606, 180, 202, 0.95], [592, 606, 228, 252, 0.95], [592, 606, 285, 305, 0.6], [592, 606, 415, 432, 0.7], [592, 606, 445, 470, 0.85], [592, 606, 550, 570, 0.5], [592, 608, 690, 708, 0.6],
  [634, 696, 130, 152, 0.45], [634, 696, 215, 250, 0.3], [634, 696, 265, 280, 0.4], [680, 694, 293, 315, 0.6], [634, 672, 328, 352, 1], [634, 696, 352, 374, 1.05], [634, 696, 408, 424, 0.5], [634, 696, 428, 454, 0.88], [640, 676, 485, 508, 0.5], [630, 690, 565, 586, 0.6],
  [726, 784, 105, 130, 0.35], [726, 784, 178, 203, 1], [726, 784, 228, 252, 1], [726, 784, 288, 307, 0.98], [726, 784, 330, 350, 0.35], [726, 784, 375, 398, 0.62], [726, 784, 420, 470, 0.92], [730, 784, 505, 525, 0.35], [726, 784, 550, 572, 0.55], [726, 784, 595, 610, 0.3], [726, 784, 630, 650, 0.55], [728, 784, 688, 708, 0.65],
];

const audioFall = raster(48, 590, 720, 788, blues, (x, y) => {
  const n = noise(x, y);
  const hum = (y > 603 && y < 630) || (y > 695 && y < 724);
  let v = x > 105 && x < 655 ? (hum ? 0.44 + n * 0.16 : 0.1 + n * 0.12 * noise(Math.floor(x / 18), 2) * 2) : n * 0.08;
  if (x > 460) v *= Math.max(0, 1 - (x - 460) / 300);
  for (const [t, b, a, c, s] of audioBands) {
    if (y >= t && y < b) {
      const mid = Math.abs(x - (a + c) / 2) / ((c - a) / 2);
      if (mid < 1) v = Math.max(v, s * (0.58 + n * 0.4));
      else if (mid < 1.6) v = Math.max(v, s * 0.35 * (0.6 + n * 0.5));
    }
  }
  return v;
});

const peaks: number[][] = [[48, 542], [60, 545], [75, 545], [88, 572], [100, 545], [112, 533], [125, 525], [138, 530], [150, 500], [160, 490], [172, 498], [180, 490], [186, 450], [192, 478], [204, 512], [215, 500], [228, 505], [236, 455], [240, 447], [246, 480], [254, 510], [262, 498], [274, 512], [284, 550], [292, 500], [298, 490], [308, 515], [318, 530], [330, 505], [338, 490], [346, 520], [352, 545], [360, 505], [368, 515], [378, 500], [386, 485], [396, 520], [404, 525], [412, 490], [420, 488], [430, 515], [440, 505], [447, 470], [451, 455], [456, 505], [464, 535], [478, 525], [492, 535], [506, 530], [520, 530], [535, 545], [548, 540], [554, 495], [560, 495], [566, 540], [580, 535], [592, 545], [606, 530], [618, 548], [630, 535], [642, 555], [655, 555], [666, 565], [674, 580], [690, 580], [698, 545], [703, 512], [708, 545], [714, 580]];
const skyline = peaks.slice(1).reduce((p, [x, y], i) => {
  const [px, py] = peaks[i];
  let out = p;
  for (let s = px + 3; s <= x; s += 3) {
    const lin = py + ((y - py) * (s - px)) / (x - px);
    out += `L${s} ${Math.min(581, lin + (lin > 578 ? 0 : (noise(s, 3) - 0.5) * 22)).toFixed(0)}`;
  }
  return out;
}, "M48 542");

function AudioSlider({ label, value }: { label: string; value: number }) {
  return (
    <label className="flex w-[75px] flex-col pt-[3px]">
      <input type="range" defaultValue={value} className={`${thumb} ${green}`} />
      <span className="mx-[2px] h-[2px] bg-[repeating-linear-gradient(90deg,#c8c8c8_0_1px,transparent_1px_8px)]" />
      <span className="mt-[2px] text-center font-bold">{label}</span>
    </label>
  );
}

function AudioSpectrum() {
  return (
    <section aria-label="Audio Spectrum" className={`${msSans} absolute left-[954px] top-[513px] flex h-[205px] w-[314px] flex-col bg-[#050505] text-[6px] leading-[7px] text-[#e0e0e0]`}>
      <header className={`${segoe} flex h-[15px] items-center justify-between bg-[#1b1b1b] px-[5px] text-[#808080]`}>Audio Spectrum<button type="button" aria-label="Close audio spectrum">×</button></header>
      <div className="mx-[4px] mt-[4px] flex h-[152px] flex-col border-2 border-[#2a2a2a] bg-black">
        <h3 className="h-[17px] text-center text-[9px] font-bold leading-[15px] text-white">Audio Spectrum (kHz)</h3>
        <svg viewBox="30 435 906 393" className="block w-full" role="img" aria-label="Audio spectrum from 0 to 4 kilohertz">
          <g stroke="#2c6a34" strokeWidth="3" fill="none">
            {Array.from({ length: 21 }, (_, i) => <path key={i} d={`M${48 + i * 43.4} 442V581`} />)}
            {[462, 502, 541].map((y) => <path key={y} d={`M48 ${y}H916`} />)}
          </g>
          <rect x="48" y="442" width="868" height="139" fill="none" stroke="#70a878" strokeWidth="2" />
          <path d={`${skyline}V581H48z`} fill="#858585" stroke="#d8d8d8" strokeWidth="2" />
          <g shapeRendering="crispEdges">{audioFall.map((p, i) => p && <path key={i} d={p} fill={blues[i]} />)}</g>
          <path d="M50 793H918" stroke="#e0e0e0" strokeWidth="3" />
          {Array.from({ length: 21 }, (_, i) => (
            <g key={i}>
              <path d={`M${51 + i * 43.3} 793v10`} stroke="#e0e0e0" strokeWidth="3" />
              <text x={52 + i * 43.2} y="823" textAnchor="middle" fontSize="16" fill="#e0e0e0" fontFamily="'Liberation Sans', Arial, sans-serif">{(i * 0.2).toFixed(2)}</text>
            </g>
          ))}
        </svg>
      </div>
      <div className="mx-[4px] mt-[2px] flex h-[30px] gap-[14px] border-2 border-[#2a2a2a] bg-black pl-[3px]">
        <AudioSlider label="Attenuation" value={9} />
        <AudioSlider label="Reference Level" value={19} />
        <button type="button" className={`${key} ml-auto mr-[6px] mt-[6px] h-[12px] w-[27px]`}>Settings</button>
      </div>
    </section>
  );
}

/* ---------- desktop ---------- */

export default function App() {
  return (
    <main className="relative h-screen w-full overflow-hidden bg-black">
      <Main />
      <WideGraph />
      <Callsigns />
      <Activity />
      <Macros />
      <ActiveStations />
      <JTAlert />
      <div className="absolute left-[984px] top-[434px] flex h-[43px] w-[73px] flex-col bg-[#606068]/45 font-['Noto_Sans',sans-serif] text-[19px] leading-[22px]">
        <span className="w-[92px] whitespace-nowrap pt-px text-right text-[#c4c4ce]">The Radio</span>
        <span className="w-[73px] overflow-hidden pl-[19px] text-[17px] text-[#a8345c]">Lurker</span>
      </div>
      <div className="absolute left-[1081px] top-[423px] whitespace-nowrap font-['Noto_Sans',sans-serif] text-[12px] leading-[14px] text-[#d0d0d0]">
        <p>My Call: W2MWS</p><p>My Radio: Yaesu FTDX-3000</p><p>My Antenna: Hustler 6BTV</p><p>Software: WSJT-X, JTAlert V2</p><p>VarAC, ft8battle.com</p>
      </div>
      <Transceiver />
      <AudioSpectrum />
    </main>
  );
}
